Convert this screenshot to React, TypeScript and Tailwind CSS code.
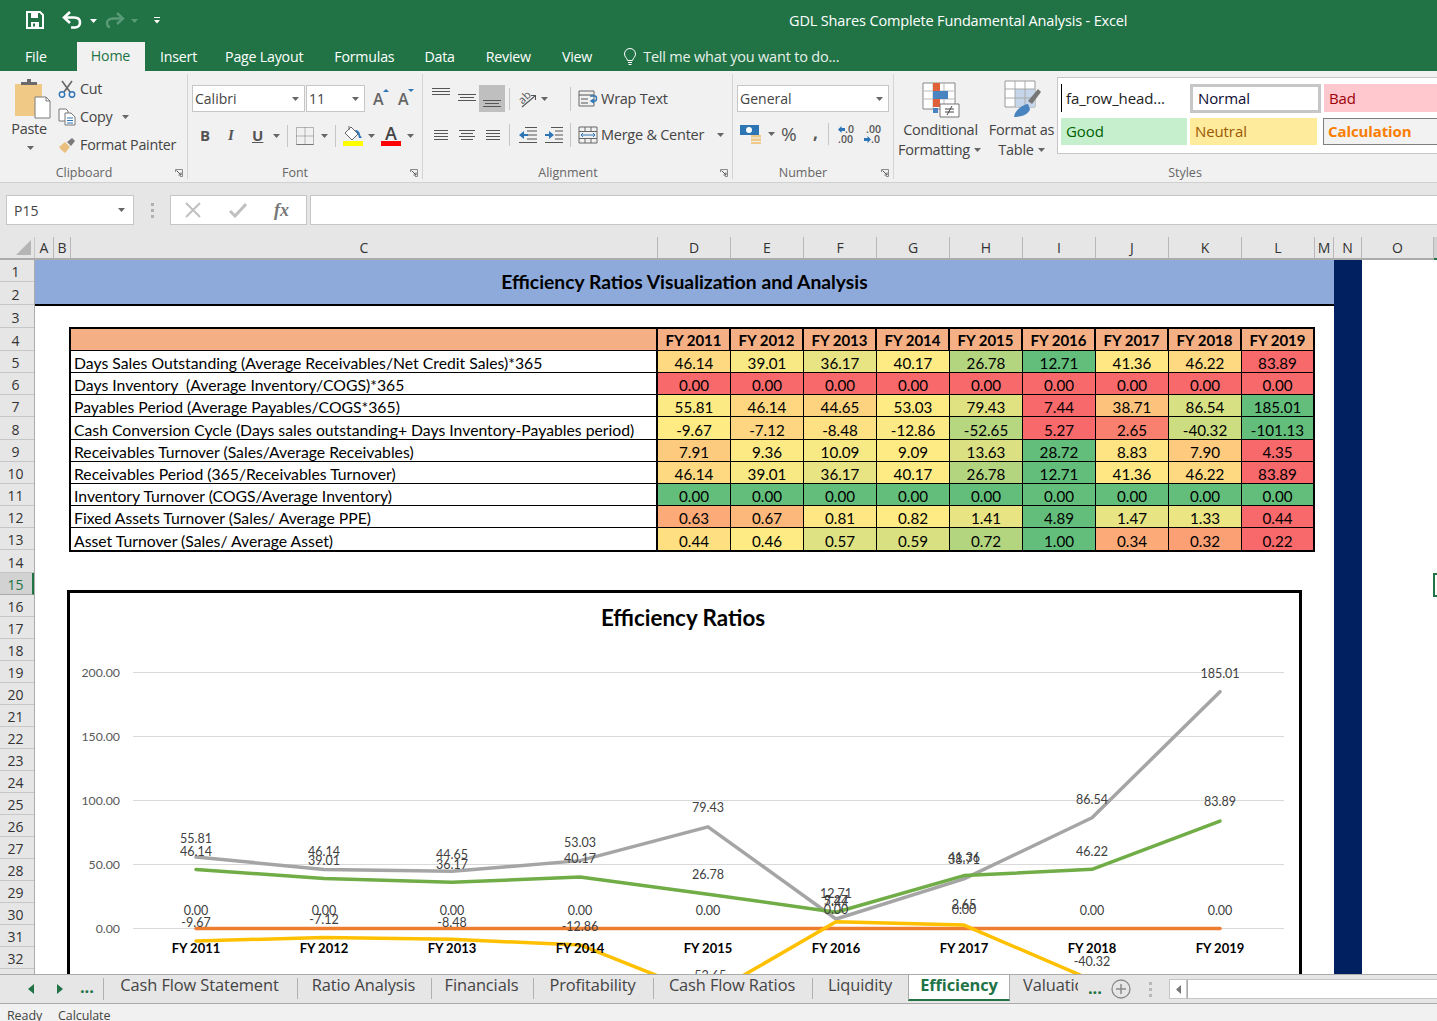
import React from "react";

const ui = "font-['Open_Sans',sans-serif]";
const cal = "font-['Lato',sans-serif]";

const years = ["FY 2011", "FY 2012", "FY 2013", "FY 2014", "FY 2015", "FY 2016", "FY 2017", "FY 2018", "FY 2019"];

// dir 1: high is green, -1: low is green
const table: { label: string; dir: number; vals: number[] }[] = [
  { label: "Days Sales Outstanding (Average Receivables/Net Credit Sales)*365", dir: -1, vals: [46.14, 39.01, 36.17, 40.17, 26.78, 12.71, 41.36, 46.22, 83.89] },
  { label: "Days Inventory  (Average Inventory/COGS)*365", dir: -1, vals: [0, 0, 0, 0, 0, 0, 0, 0, 0] },
  { label: "Payables Period (Average Payables/COGS*365)", dir: 1, vals: [55.81, 46.14, 44.65, 53.03, 79.43, 7.44, 38.71, 86.54, 185.01] },
  { label: "Cash Conversion Cycle (Days sales outstanding+ Days Inventory-Payables period)", dir: -1, vals: [-9.67, -7.12, -8.48, -12.86, -52.65, 5.27, 2.65, -40.32, -101.13] },
  { label: "Receivables Turnover (Sales/Average Receivables)", dir: 1, vals: [7.91, 9.36, 10.09, 9.09, 13.63, 28.72, 8.83, 7.9, 4.35] },
  { label: "Receivables Period (365/Receivables Turnover)", dir: -1, vals: [46.14, 39.01, 36.17, 40.17, 26.78, 12.71, 41.36, 46.22, 83.89] },
  { label: "Inventory Turnover (COGS/Average Inventory)", dir: 1, vals: [0, 0, 0, 0, 0, 0, 0, 0, 0] },
  { label: "Fixed Assets Turnover (Sales/ Average PPE)", dir: 1, vals: [0.63, 0.67, 0.81, 0.82, 1.41, 4.89, 1.47, 1.33, 0.44] },
  { label: "Asset Turnover (Sales/ Average Asset)", dir: 1, vals: [0.44, 0.46, 0.57, 0.59, 0.72, 1.0, 0.34, 0.32, 0.22] },
];

const mix = (a: number[], b: number[], t: number) =>
  `rgb(${a.map((v, i) => Math.round(v + (b[i] - v) * t)).join(",")})`;

function scale(v: number, vals: number[], dir: number) {
  const red = [248, 105, 107];
  const yel = [255, 235, 132];
  const grn = [99, 190, 123];
  const sorted = [...vals].sort((a, b) => a - b);
  const min = sorted[0];
  const max = sorted[8];
  const mid = sorted[4];
  if (min === max) return dir === 1 ? mix(grn, grn, 0) : mix(red, red, 0);
  const lo = dir === 1 ? red : grn;
  const hi = dir === 1 ? grn : red;
  if (v <= mid) return mix(lo, yel, (v - min) / (mid - min || 1));
  return mix(yel, hi, (v - mid) / (max - mid || 1));
}

const rowHeights = [22, 23, 23, 23, 22, 22, 22, 23, 22, 22, 22, 22, 22, 23, 22, 22, 22, 22, 22, 22, 22, 22, 22, 22, 22, 22, 22, 22, 22, 22, 22, 22, 22];

const columns: [string, number][] = [
  ["A", 19], ["B", 17], ["C", 587], ["D", 73], ["E", 73], ["F", 73], ["G", 73], ["H", 73], ["I", 73], ["J", 73], ["K", 73], ["L", 73], ["M", 19], ["N", 28], ["O", 72],
];

function Caret({ className = "", color = "#666" }: { className?: string; color?: string }) {
  return (
    <svg width="7" height="4" viewBox="0 0 7 4" className={className}>
      <path d="M0 0h7L3.5 4z" fill={color} />
    </svg>
  );
}

function Launcher() {
  return (
    <svg width="8" height="8" viewBox="0 0 8 8">
      <path d="M.5 3V.5H7.5V7.5H5" fill="none" stroke="#8a8a8a" />
      <path d="M1.5 1.5L6 6M6 3.5V6H3.5" fill="none" stroke="#5a5a5a" />
    </svg>
  );
}

function Group({ w, label, labelCenter, children }: { w: number; label: string; labelCenter?: number; children: React.ReactNode }) {
  return (
    <div className="relative shrink-0 flex flex-col h-[111px]" style={{ width: w }}>
      <div className="h-[90px]">{children}</div>
      <div className="flex items-center h-[21px] pt-[3px]">
        <div className="shrink-0 text-center text-[12.5px] text-[#666]" style={{ width: labelCenter ? labelCenter * 2 : w }}>{label}</div>
        <div className="ml-auto mr-[5px] flex">{w < 500 && <Launcher />}</div>
      </div>
    </div>
  );
}

function Sep({ h = 22 }: { h?: number }) {
  return <div className="w-px bg-[#c6c6c6] shrink-0" style={{ height: h }} />;
}

function Lines({ ys, xs }: { ys: number[]; xs: [number, number][] }) {
  return (
    <svg width="20" height="18" viewBox="0 0 20 18">
      {ys.map((y, i) => (
        <path key={i} d={`M${xs[i][0]} ${y + 0.5}H${xs[i][1]}`} stroke="#555" />
      ))}
    </svg>
  );
}

function TopBar() {
  return (
    <div className="h-[41px] bg-[#217346] flex items-center text-white relative">
      <svg width="18" height="18" viewBox="0 0 18 18" className="ml-[26px] mt-[-2px]">
        <path d="M1 1h13l3 3v13H1z" fill="none" stroke="#fff" strokeWidth="2" />
        <path d="M5 2h7v5H5zM5 11h8v6H5z" fill="#fff" />
        <path d="M7 12.5h2v3H7z" fill="#217346" />
      </svg>
      <svg width="22" height="18" viewBox="0 0 22 18" className="ml-[18px] mt-[-2px]">
        <path d="M8 1L2 6.5 8 12" fill="none" stroke="#fff" strokeWidth="2.6" />
        <path d="M3 6.5h9c4 0 6 2 6 5s-2 5-5 5H9" fill="none" stroke="#fff" strokeWidth="2.6" />
      </svg>
      <Caret color="#fff" className="ml-[6px]" />
      <svg width="20" height="16" viewBox="0 0 20 16" className="ml-[8px] mt-[-1px]">
        <path d="M12 1l6 5.5-6 5.5" fill="none" stroke="#5a9a78" strokeWidth="2.4" />
        <path d="M17 6.5H8c-4 0-6 2-6 4.5s1 4 3 4.5" fill="none" stroke="#5a9a78" strokeWidth="2.4" />
      </svg>
      <Caret color="#5a9a78" className="ml-[6px]" />
      <svg width="7" height="7" viewBox="0 0 7 7" className="ml-[16px]">
        <path d="M0 .5h6" stroke="#fff" />
        <path d="M0 3h6L3 6.5z" fill="#fff" />
      </svg>
      <div className={`absolute left-[789px] top-[11px] text-[14.5px] leading-[19px] tracking-[-0.15px] ${ui}`}>
        GDL Shares Complete Fundamental Analysis - Excel
      </div>
    </div>
  );
}

function MenuTabs() {
  const items: [string, number][] = [["Insert", 0], ["Page Layout", 28], ["Formulas", 31], ["Data", 30], ["Review", 31], ["View", 31]];
  return (
    <div className={`h-[30px] bg-[#217346] flex items-center text-white text-[14.2px] tracking-[-0.2px] pt-[1px] ${ui}`}>
      <div className="w-[77px] pl-[25px]">File</div>
      <div className="w-[68px] h-full mt-[-1px] bg-[#f1f1f1] text-[#217346] flex items-center justify-center pr-[1px]">Home</div>
      <div className="flex ml-[15px]">
        {items.map(([t, g]) => (
          <div key={t} style={{ marginLeft: g }}>{t}</div>
        ))}
      </div>
      <svg width="14" height="18" viewBox="0 0 14 18" className="ml-[31px]">
        <path d="M4.5 12.5C4 10 1.500 9 1.500 6a5.500 5.500 0 0 1 11 0c0 3-2.500 4-3 6.500z" fill="none" stroke="#fff" />
        <path d="M5 14.500h4M5.500 16.500h3" stroke="#fff" />
      </svg>
      <div className="ml-[6px] text-[14.5px] text-[#e6f0ea]">Tell me what you want to do...</div>
    </div>
  );
}

function Combo({ text, w, size = "text-[14px]" }: { text: string; w: number; size?: string }) {
  return (
    <div className={`h-[27px] bg-white border border-[#c6c6c6] flex items-center pl-[2px] pr-[5px] justify-between text-[#444] ${size}`} style={{ width: w }}>
      <span>{text}</span>
      <Caret />
    </div>
  );
}

function Clipboard() {
  return (
    <Group w={188} label="Clipboard" labelCenter={84}>
      <div className="flex pl-[15px]">
        <div className="w-[36px] flex flex-col items-center">
          <svg width="36" height="40" viewBox="0 0 36 40" className="mt-[8px]">
            <path d="M0 5h27v32H0z" fill="#f0c987" />
            <path d="M6 6V3h6V0h4v3h6v3z" fill="#6a6a6a" />
            <path d="M20 18h11l4 4v17H20z" fill="#fff" stroke="#7a7a7a" />
            <path d="M31 18v4h4" fill="none" stroke="#7a7a7a" />
          </svg>
          <div className="mt-0 text-[14.5px] leading-[20px] text-[#444] tracking-[-0.3px] ml-[-8px]">Paste</div>
          <Caret className="mt-[7px] ml-[-6px]" />
        </div>
        <div className="ml-[7px] pt-[4px] text-[14.3px] text-[#444] tracking-[-0.25px]">
          <div className="h-[28px] flex items-center">
            <svg width="18" height="18" viewBox="0 0 18 18">
              <path d="M4 1l8 11M14 1L6 12" stroke="#666" strokeWidth="1.600" fill="none" />
              <circle cx="4" cy="14.500" r="2.700" fill="none" stroke="#2e75b6" strokeWidth="1.400" />
              <circle cx="14" cy="14.500" r="2.700" fill="none" stroke="#2e75b6" strokeWidth="1.400" />
            </svg>
            <span className="ml-[4px]">Cut</span>
          </div>
          <div className="h-[28px] flex items-center">
            <svg width="18" height="18" viewBox="0 0 18 18">
              <path d="M1 1h7l2 2v10H1z" fill="#fff" stroke="#777" />
              <path d="M7 5h6l4 4v8H7z" fill="#fff" stroke="#777" />
              <path d="M9 10h6M9 12.500h6M9 15h6" stroke="#2e75b6" />
            </svg>
            <span className="ml-[4px]">Copy</span>
            <Caret className="ml-[9px]" />
          </div>
          <div className="h-[27px] flex items-center">
            <svg width="18" height="16" viewBox="0 0 18 16">
              <path d="M1 10l6-5 5 5-5 6c-2-2-4-3-6-6z" fill="#e9bf7f" />
              <path d="M9 5l5-4 3 3-4 5z" fill="#7a7a7a" />
            </svg>
            <span className="ml-[4px]">Format Painter</span>
          </div>
        </div>
      </div>
    </Group>
  );
}

function Font() {
  return (
    <Group w={235} label="Font" labelCenter={107}>
      <div className="pl-[4px] pt-[14px]">
        <div className="flex items-center">
          <Combo text="Calibri" w={113} />
          <div className="ml-[1px]"><Combo text="11" w={59} /></div>
          <div className="flex ml-[8px] text-[#666] text-[16px] font-semibold">
            <span className="w-[25px] relative">A<i className="absolute left-[10px] top-[2px] border-x-[3px] border-b-[3px] border-x-transparent border-b-[#2e75b6]" /></span>
            <span className="w-[20px] relative">A<i className="absolute left-[10px] top-[2px] border-x-[3px] border-t-[3px] border-x-transparent border-t-[#2e75b6]" /></span>
          </div>
        </div>
        <div className="flex items-center h-[23px] mt-[12px] text-[#555] text-[15px]">
          <span className="w-[28px] ml-[8px] font-bold">B</span>
          <span className="w-[24px] font-bold italic font-['Liberation_Serif',serif]">I</span>
          <span className="w-[21px] font-bold underline">U</span>
          <Caret />
          <div className="ml-[7px] mr-[8px]"><Sep /></div>
          <svg width="18" height="18" viewBox="0 0 18 18">
            <path d="M.5.500h17v17H.500z M9 .500v17M.500 9h17" fill="none" stroke="#777" strokeDasharray="1 1" />
            <path d="M.500 17.500h17" stroke="#777" />
          </svg>
          <Caret className="ml-[7px]" />
          <div className="ml-[7px] mr-[7px]"><Sep /></div>
          <div className="flex flex-col items-center w-[20px]">
            <svg width="20" height="15" viewBox="0 0 20 15">
              <path d="M8 1l7 7-6 6-7-7z" fill="#fff" stroke="#666" />
              <path d="M6 0v4" stroke="#666" />
              <path d="M12 4c3 0 5 2 5 5l2 3h-3l-1-4z" fill="#2e75b6" />
            </svg>
            <div className="w-[20px] h-[5px] bg-[#ffff00]" />
          </div>
          <Caret className="ml-[5px]" />
          <div className="flex flex-col items-center w-[20px] ml-[6px]">
            <span className="text-[18px] leading-[15px] font-semibold text-[#444]">A</span>
            <div className="w-[20px] h-[5px] bg-[#ff0000]" />
          </div>
          <Caret className="ml-[6px]" />
        </div>
      </div>
      <div className="absolute right-0 top-[3px] w-px h-[105px] bg-[#d4d4d4]" />
    </Group>
  );
}

function Alignment() {
  const l3: [number, number][] = [[1, 19], [1, 19], [1, 19]];
  return (
    <Group w={310} label="Alignment" labelCenter={145}>
      <div className="flex">
        <div className="pl-[8px] pt-[14px]">
          <div className="flex items-center h-[27px]">
            <div className="w-[26px] mt-[-8px]"><Lines ys={[2, 5, 8]} xs={l3} /></div>
            <div className="w-[22px]"><Lines ys={[4, 7, 10]} xs={[[1, 19], [3, 17], [1, 19]]} /></div>
            <div className="w-[26px] h-[27px] bg-[#bfbfbf] flex items-end justify-center pb-[2px]"><Lines ys={[8, 11, 14]} xs={[[1, 19], [3, 17], [1, 19]]} /></div>
            <div className="ml-[4px] mr-[8px]"><Sep /></div>
            <svg width="18" height="18" viewBox="0 0 18 18">
              <text x="1" y="12" fontSize="11" fill="#555" transform="rotate(-45 6 9)">ab</text>
              <path d="M4 17L17 6M13 5.500h4.500V10" fill="none" stroke="#555" strokeWidth="1.100" />
            </svg>
            <Caret className="ml-[5px]" />
          </div>
          <div className="flex items-center h-[24px] mt-[11px]">
            <div className="w-[26px] ml-[1px]"><Lines ys={[4, 7, 10, 13]} xs={[[2, 16], [2, 16], [2, 16], [2, 16]]} /></div>
            <div className="w-[26px]"><Lines ys={[4, 7, 10, 13]} xs={[[1, 17], [3, 15], [1, 17], [3, 15]]} /></div>
            <div className="w-[21px]"><Lines ys={[4, 7, 10, 13]} xs={[[2, 16], [2, 16], [2, 16], [2, 16]]} /></div>
            <div className="ml-[4px] mr-[8px]"><Sep /></div>
            <svg width="19" height="18" viewBox="0 0 19 18" className="mr-[7px]">
              <path d="M7 1.500h12M9 5h10M9 9h10M9 13h10M1 16.500h18" stroke="#555" />
              <path d="M1 9l5-4v3h4v2H6v3z" fill="#2e75b6" />
            </svg>
            <svg width="19" height="18" viewBox="0 0 19 18">
              <path d="M7 1.500h12M11 5h8M11 9h8M11 13h8M1 16.500h18" stroke="#555" />
              <path d="M10 9L5 5v3H1v2h4v3z" fill="#2e75b6" />
            </svg>
          </div>
        </div>
        <div className="ml-[7px] mt-[14px] flex flex-col">
          <div className="h-[27px] flex items-center"><Sep h={24} /></div>
          <div className="h-[24px] mt-[11px] flex items-center"><Sep h={24} /></div>
        </div>
        <div className="ml-[7px] pt-[14px] text-[14.5px] text-[#444] tracking-[-0.25px]">
          <div className="h-[27px] flex items-center">
            <svg width="20" height="18" viewBox="0 0 20 18">
              <path d="M1 1h15v15H1z" fill="none" stroke="#666" />
              <path d="M1 5h15M3 9h7M3 13h7" stroke="#555" />
              <path d="M12 6h5c2 0 2 5 0 5h-3M16 9l-3 2 3 2" fill="none" stroke="#2e75b6" strokeWidth="1.400" />
            </svg>
            <span className="ml-[3px]">Wrap Text</span>
          </div>
          <div className="h-[24px] mt-[11px] flex items-center">
            <svg width="20" height="18" viewBox="0 0 20 18">
              <path d="M1 1h18v16H1zM1 5.500h18M1 12.500h18M7 1v4M13 1v4M7 13v4M13 13v4" fill="none" stroke="#666" />
              <path d="M3 9h14M5 7L3 9l2 2M15 7l2 2-2 2" fill="none" stroke="#2e75b6" />
            </svg>
            <span className="ml-[3px]">Merge &amp; Center</span>
            <Caret className="ml-[13px]" />
          </div>
        </div>
      </div>
    </Group>
  );
}

function NumberGroup() {
  return (
    <Group w={161} label="Number" labelCenter={70}>
      <div className="pl-[4px] pt-[14px]">
        <Combo text="General" w={152} />
        <div className="flex items-center h-[24px] mt-[10px] text-[#555]">
          <svg width="22" height="20" viewBox="0 0 22 20" className="ml-[3px]">
            <path d="M0 1h19v10H0z" fill="#2e75b6" />
            <circle cx="9" cy="6" r="3" fill="#fff" />
            <path d="M11 11h10v2.500H11zM11 14.500h10V17H11zM11 18h10v2H11z" fill="#f0c987" />
          </svg>
          <Caret className="ml-[6px]" />
          <span className="ml-[6px] w-[32px] text-[19px] leading-[20px]">%</span>
          <span className="w-[15px] text-[17px] font-bold leading-[20px] mt-[-3px]">,</span>
          <Sep />
          <div className="ml-[9px] w-[26px] text-[10.5px] leading-[10px] font-semibold">
            <div className="flex items-center">
              <svg width="7" height="7" viewBox="0 0 7 7"><path d="M0 3.500L3.500 0v2H7v3H3.500v2z" fill="#2e75b6" /></svg>
              <span>.0</span>
            </div>
            <div>.00</div>
          </div>
          <div className="w-[18px] text-[10.5px] leading-[10px] font-semibold">
            <div className="pl-[2px]">.00</div>
            <div className="flex items-center">
              <svg width="7" height="7" viewBox="0 0 7 7"><path d="M7 3.500L3.500 0v2H0v3h3.500v2z" fill="#2e75b6" /></svg>
              <span>.0</span>
            </div>
          </div>
        </div>
      </div>
    </Group>
  );
}

function Styles() {
  return (
    <Group w={543} label="Styles" labelCenter={291}>
      <div className="flex">
        <div className="w-[94px] flex flex-col items-center text-[14.5px] leading-[20px] text-[#444] tracking-[-0.25px] pr-[3px]">
          <svg width="38" height="36" viewBox="0 0 38 36" className="mt-[11px] ml-[2px]">
            <path d="M1 1h32v26H1z" fill="#fff" stroke="#888" />
            <path d="M1 9h32M1 17h32M11 1v26M22 1v26" stroke="#bbb" />
            <path d="M11 1h7v8h-7zM11 17h7v8h-7z" fill="#e0603a" />
            <path d="M11 9h15v8H11z" fill="#4a84c0" />
            <path d="M11 26h5v5h-5z" fill="#4a84c0" />
            <path d="M18 22h19v13H18z" fill="#fff" stroke="#777" />
            <path d="M23 27h9M23 30h9M30 24l-5 9" stroke="#444" />
          </svg>
          <div className="mt-[2px] ml-[2px]">Conditional</div>
          <div className="flex items-center">Formatting<Caret className="ml-[4px]" /></div>
        </div>
        <div className="w-[70px] flex flex-col items-center text-[14.5px] leading-[20px] text-[#444] tracking-[-0.25px] pr-[3px]">
          <svg width="38" height="38" viewBox="0 0 38 38" className="mt-[9px] ml-[2px]">
            <path d="M1 1h30v26H1z" fill="#fff" stroke="#999" />
            <path d="M11 9h20v18H11z" fill="#c5d5ea" />
            <path d="M1 9h30M1 18h30M11 1v26M21 1v26" stroke="#aaa" />
            <path d="M24 21l10-12 3 3-9 12z" fill="#777" />
            <path d="M10 37c1-7 8-12 14-13l2 5c-1 4-6 8-16 8z" fill="#4a84c0" />
          </svg>
          <div className="mt-[2px] whitespace-nowrap">Format as</div>
          <div className="flex items-center">Table<Caret className="ml-[4px]" /></div>
        </div>
        <div className="ml-[-1px] mt-[6px] flex-1 h-[77px] bg-white border border-[#c6c6c6] border-r-0 pl-[3px] pt-[6px] text-[15px] tracking-[-0.1px]">
          <div className="flex h-[29px]">
            <div className="w-[126px] border-l border-black pl-[4px] text-[#222] flex items-center whitespace-nowrap overflow-hidden h-[28px]">fa_row_head...</div>
            <div className="w-[131px] ml-[3px] border-[3px] border-[#c6c6c6] pl-[5px] flex items-center text-[#0b0b33] h-[29px]">Normal</div>
            <div className="flex-1 ml-[3px] bg-[#ffc7ce] text-[#9c0006] pl-[5px] flex items-center h-[28px]">Bad</div>
          </div>
          <div className="flex h-[27px] mt-[5px]">
            <div className="w-[126px] bg-[#c6efce] text-[#006100] pl-[5px] flex items-center">Good</div>
            <div className="w-[127px] ml-[3px] bg-[#ffeb9c] text-[#9c5700] pl-[5px] flex items-center">Neutral</div>
            <div className="flex-1 ml-[6px] bg-[#f2f2f2] border border-[#7f7f7f] border-r-0 text-[#fa7d00] font-bold pl-[4px] flex items-center">Calculation</div>
          </div>
        </div>
      </div>
    </Group>
  );
}

function GroupDivider() {
  return <div className="w-px h-[105px] mt-[3px] bg-[#d4d4d4] shrink-0 ml-[-1px]" />;
}

function Ribbon() {
  return (
    <div className={`h-[112px] bg-[#f1f1f1] border-b border-[#d0d0d0] flex overflow-hidden ${ui}`}>
      <Clipboard />
      <GroupDivider />
      <Font />
      <Alignment />
      <GroupDivider />
      <NumberGroup />
      <GroupDivider />
      <Styles />
    </div>
  );
}

function FormulaBar() {
  return (
    <div className={`h-[54px] bg-[#e6e6e6] flex items-start pt-[12px] ${ui}`}>
      <div className="ml-[6px] w-[128px] h-[30px] bg-white border border-[#c6c6c6] flex items-center justify-between pl-[7px] pr-[8px] text-[14px] text-[#444]">
        <span>P15</span>
        <Caret />
      </div>
      <div className="w-[36px] h-[30px] flex flex-col items-center justify-center gap-[3px]">
        <i className="w-[3px] h-[3px] bg-[#b0b0b0]" />
        <i className="w-[3px] h-[3px] bg-[#b0b0b0]" />
        <i className="w-[3px] h-[3px] bg-[#b0b0b0]" />
      </div>
      <div className="w-[137px] h-[30px] bg-white border border-[#c6c6c6] flex items-center text-[#b8b8b8]">
        <svg width="16" height="16" viewBox="0 0 16 16" className="ml-[14px]">
          <path d="M1 1l14 14M15 1L1 15" stroke="#c0c0c0" strokeWidth="2" />
        </svg>
        <svg width="18" height="16" viewBox="0 0 18 16" className="ml-[28px]">
          <path d="M1 9l5 5L17 2" fill="none" stroke="#c0c0c0" strokeWidth="3" />
        </svg>
        <span className="ml-[27px] text-[18px] leading-[20px] italic font-bold text-[#777] font-['Liberation_Serif',serif]">fx</span>
      </div>
      <div className="ml-[3px] flex-1 h-[30px] bg-white border border-[#c6c6c6] border-r-0" />
    </div>
  );
}

function ColumnHeader() {
  return (
    <div className={`flex h-[23px] bg-[#e6e6e6] border-b-2 border-[#ababab] text-[14px] text-[#333] ${ui}`}>
      <div className="w-[35px] shrink-0 border-r border-[#c6c6c6] flex items-end justify-end pr-[3px] pb-[3px]">
        <svg width="15" height="15" viewBox="0 0 15 15"><path d="M15 0v15H0z" fill="#b5b5b5" /></svg>
      </div>
      {columns.map(([c, w]) => (
        <div key={c} style={{ width: w }} className="shrink-0 border-r border-[#b8b8b8] flex items-center justify-center">{c}</div>
      ))}
      <div className="flex-1 bg-[#d2d2d2] border-b-2 border-[#217346] mb-[-2px]" />
    </div>
  );
}

function RowHeader() {
  return (
    <div className={`w-[35px] shrink-0 bg-[#e6e6e6] border-r border-[#ababab] text-[14px] text-[#333] ${ui}`}>
      {rowHeights.map((h, i) => (
        <div
          key={i}
          style={{ height: h }}
          className={i === 14
            ? "flex items-center justify-center bg-[#d2d2d2] text-[#217346] border-b border-[#ababab] border-r-2 border-r-[#217346] pr-[1px] pt-[2px]"
            : "flex items-center justify-center border-b border-[#c6c6c6] pr-[3px] pt-[2px]"}
        >
          {i + 1}
        </div>
      ))}
    </div>
  );
}

function RatioTable() {
  return (
    <div className={`ml-[34px] mt-[21px] w-[1246px] border-2 border-black text-black ${cal}`}>
      <div className="flex h-[22px] border-b border-black">
        <div className="w-[587px] shrink-0 bg-[#f4b084] border-r-2 border-black" />
        {years.map((y, i) => (
          <div key={y} className={`bg-[#f4b084] flex items-center justify-center pt-[1px] font-bold text-[15px] ${i < 8 ? "w-[73px] shrink-0 border-r-2 border-black" : "flex-1"}`}>{y}</div>
        ))}
      </div>
      {table.map((r, ri) => (
        <div key={r.label} className={`flex ${ri === 3 ? "h-[23px]" : "h-[22px]"} ${ri < 8 ? "border-b border-black" : ""}`}>
          <div className="w-[587px] shrink-0 bg-white border-r-2 border-black pl-[3px] pt-[3px] flex items-center text-[15.75px] whitespace-pre overflow-hidden">{r.label}</div>
          {r.vals.map((v, i) => (
            <div
              key={i}
              style={{ backgroundColor: scale(v, r.vals, r.dir) }}
              className={`flex items-center justify-center pt-[4px] text-[15.2px] ${i < 8 ? "w-[73px] shrink-0 border-r border-black" : "flex-1"}`}
            >
              {v.toFixed(2)}
            </div>
          ))}
        </div>
      ))}
    </div>
  );
}

const xs = [196, 324, 452, 580, 708, 836, 964, 1092, 1220];
const yOf = (v: number) => 928.5 - v * 1.28;

const series: [string, number[]][] = [
  ["#ed7d31", table[1].vals],
  ["#a5a5a5", table[2].vals],
  ["#ffc000", table[3].vals],
  ["#70ad47", table[0].vals],
];

const dataLabels: [number, string, number][] = [
  [196, "55.81", 839], [196, "46.14", 852], [196, "0.00", 911], [196, "-9.67", 923],
  [324, "46.14", 852], [324, "39.01", 861], [324, "0.00", 911], [324, "-7.12", 920],
  [452, "44.65", 855], [452, "36.17", 865], [452, "0.00", 911], [452, "-8.48", 923],
  [580, "53.03", 843], [580, "40.17", 859], [580, "0.00", 911], [580, "-12.86", 927],
  [708, "79.43", 808], [708, "26.78", 875], [708, "0.00", 911], [708, "-52.65", 976],
  [836, "12.71", 894], [836, "7.44", 902], [836, "5.27", 901], [836, "0.00", 910],
  [964, "41.36", 858], [964, "38.71", 860], [964, "2.65", 905], [964, "0.00", 910],
  [1092, "86.54", 800], [1092, "46.22", 852], [1092, "0.00", 911], [1092, "-40.32", 962],
  [1220, "185.01", 674], [1220, "83.89", 802], [1220, "0.00", 911],
];

function Chart() {
  return (
    <div className={`ml-[32px] mt-[38px] w-[1235px] h-[420px] border-[3px] border-black bg-white ${cal}`}>
      <div className="h-[47px] flex items-center justify-center text-[22.4px] font-bold text-black pt-[3px] pr-[3px]">Efficiency Ratios</div>
      <svg width="1229" height="370" viewBox="70 640 1229 370" className="block">
        {[200, 150, 100, 50, 0].map((v) => (
          <g key={v}>
            <path d={`M133 ${yOf(v)}H1284`} stroke="#d9d9d9" />
            <text x="120" y={yOf(v) + 4} textAnchor="end" fontSize="12.3" fill="#595959">{v.toFixed(2)}</text>
          </g>
        ))}
        {series.map(([c, vals]) => (
          <polyline key={c} points={vals.map((v, i) => `${xs[i]},${yOf(v)}`).join(" ")} fill="none" stroke={c} strokeWidth="3.500" strokeLinecap="round" strokeLinejoin="round" />
        ))}
        {dataLabels.map(([x, t, y], i) => (
          <text key={i} x={x} y={y + 4} textAnchor="middle" fontSize="12.500" fill="#404040">{t}</text>
        ))}
        {years.map((y, i) => (
          <text key={y} x={xs[i]} y="953" textAnchor="middle" fontSize="13" fontWeight="700" fill="#000">{y}</text>
        ))}
      </svg>
    </div>
  );
}

function Sheet() {
  return (
    <div className="flex h-[714px] overflow-hidden">
      <RowHeader />
      <div className="w-[1299px] shrink-0 bg-white">
        <div className={`h-[46px] bg-[#8eaadb] border-b-2 border-black flex items-center justify-center font-bold text-[19.3px] text-black pt-[1px] ${cal}`}>
          Efficiency Ratios Visualization and Analysis
        </div>
        <RatioTable />
        <Chart />
      </div>
      <div className="w-[28px] shrink-0 bg-[#002060]" />
      <div className="flex-1 bg-white relative overflow-hidden">
        <div className="absolute left-[71px] top-[313px] w-[20px] h-[24px] border-2 border-[#217346]" />
      </div>
    </div>
  );
}

function SheetTabs() {
  const tabs: [string, number][] = [["Cash Flow Statement", 194], ["Ratio Analysis", 134], ["Financials", 102], ["Profitability", 120], ["Cash Flow Ratios", 159]];
  return (
    <div className={`h-[30px] bg-[#e6e6e6] border-y border-[#ababab] flex items-stretch text-[16.4px] text-[#444] tracking-[-0.1px] ${ui}`}>
      <div className="w-[103px] shrink-0 flex items-center text-[#217346]">
        <svg width="6" height="10" viewBox="0 0 6 10" className="ml-[28px]"><path d="M6 0v10L0 5z" fill="#217346" /></svg>
        <svg width="6" height="10" viewBox="0 0 6 10" className="ml-[23px]"><path d="M0 0v10l6-5z" fill="#217346" /></svg>
        <span className="ml-[17px] font-bold mt-[-4px]">...</span>
      </div>
      <div className="w-px h-[22px] self-center bg-[#b0b0b0] shrink-0" />
      {tabs.map(([t, w]) => (
        <div key={t} style={{ width: w }} className="shrink-0 flex items-center justify-center relative pr-[3px] pb-[7px]">
          {t}
          <div className="absolute right-0 top-[3px] h-[21px] w-px bg-[#b0b0b0]" />
        </div>
      ))}
      <div className="w-[95px] shrink-0 flex items-center justify-center pr-[1px] pb-[7px]">Liquidity</div>
      <div className="w-[102px] shrink-0 h-[26px] self-start bg-white border-x border-[#ababab] border-b-2 border-b-[#217346] flex items-center justify-center font-bold text-[#217346] pb-[3px]">Efficiency</div>
      <div className="w-[55px] ml-[13px] shrink-0 flex items-center overflow-hidden whitespace-nowrap pb-[7px]">Valuation</div>
      <span className="w-[18px] ml-[10px] text-[#217346] font-bold leading-[26px]">...</span>
      <div className="flex items-center ml-[5px]">
        <svg width="20" height="20" viewBox="0 0 20 20">
          <circle cx="10" cy="10" r="9" fill="none" stroke="#8a8a8a" strokeWidth="1.300" />
          <path d="M10 5v10M5 10h10" stroke="#8a8a8a" strokeWidth="1.500" />
        </svg>
      </div>
      <div className="flex flex-col items-center justify-center gap-[3px] ml-[18px] w-[3px]">
        <i className="w-[3px] h-[3px] bg-[#b8b8b8]" />
        <i className="w-[3px] h-[3px] bg-[#b8b8b8]" />
        <i className="w-[3px] h-[3px] bg-[#b8b8b8]" />
      </div>
      <div className="flex items-center ml-[17px] flex-1">
        <div className="w-[18px] h-[20px] bg-white border border-[#c6c6c6] flex items-center justify-center">
          <svg width="5" height="9" viewBox="0 0 5 9"><path d="M5 0v9L0 4.500z" fill="#777" /></svg>
        </div>
        <div className="flex-1 h-[20px] bg-white border-y border-[#c6c6c6] border-l border-l-[#ababab]" />
      </div>
    </div>
  );
}

function StatusBar() {
  return (
    <div className={`h-[18px] bg-[#f1f1f1] flex text-[12.5px] text-[#444] overflow-hidden pt-[3px] pl-[7px] tracking-[-0.1px] ${ui}`}>
      <span>Ready</span>
      <span className="ml-[16px]">Calculate</span>
    </div>
  );
}

export default function App() {
  return (
    <div className="w-[1437px] h-[1021px] overflow-hidden bg-white">
      <TopBar />
      <MenuTabs />
      <Ribbon />
      <FormulaBar />
      <ColumnHeader />
      <Sheet />
      <SheetTabs />
      <StatusBar />
    </div>
  );
}
